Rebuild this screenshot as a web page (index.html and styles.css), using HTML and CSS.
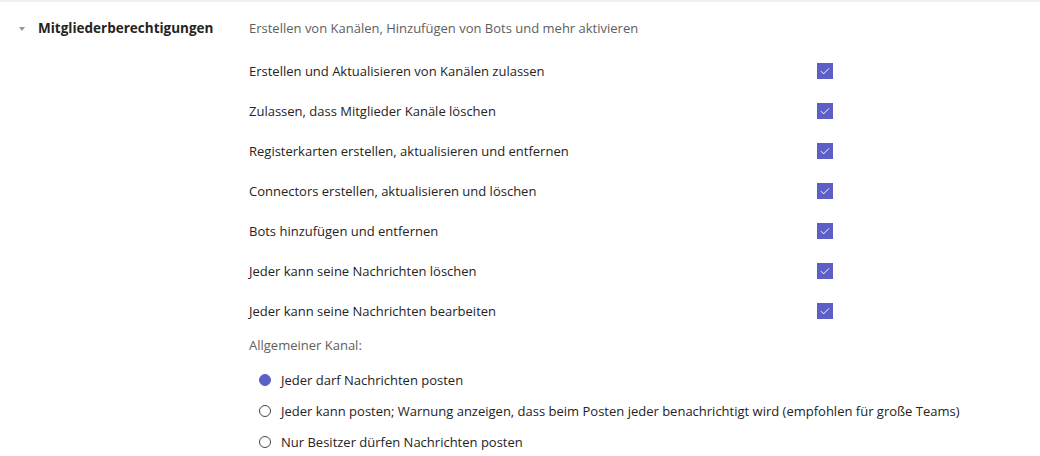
FILE: index.html
```html
<!DOCTYPE html>
<html lang="de">
<head>
<meta charset="utf-8">
<link rel="stylesheet" href="styles.css">
</head>
<body>
<div class="page">
  <section class="section">
    <div class="side">
      <span class="caret"></span>
      <h2 class="title">Mitgliederberechtigungen</h2>
    </div>
    <div class="main">
      <p class="desc">Erstellen von Kanälen, Hinzufügen von Bots und mehr aktivieren</p>
      <div class="row"><span class="label">Erstellen und Aktualisieren von Kanälen zulassen</span><span class="check"><svg viewBox="0 0 16 16" width="16" height="16"><path d="M4 8.2l2.6 2.6L12 5.4" fill="none" stroke="#fff" stroke-width="1"/></svg></span></div>
      <div class="row"><span class="label">Zulassen, dass Mitglieder Kanäle löschen</span><span class="check"><svg viewBox="0 0 16 16" width="16" height="16"><path d="M4 8.2l2.6 2.6L12 5.4" fill="none" stroke="#fff" stroke-width="1"/></svg></span></div>
      <div class="row"><span class="label">Registerkarten erstellen, aktualisieren und entfernen</span><span class="check"><svg viewBox="0 0 16 16" width="16" height="16"><path d="M4 8.2l2.6 2.6L12 5.4" fill="none" stroke="#fff" stroke-width="1"/></svg></span></div>
      <div class="row"><span class="label">Connectors erstellen, aktualisieren und löschen</span><span class="check"><svg viewBox="0 0 16 16" width="16" height="16"><path d="M4 8.2l2.6 2.6L12 5.4" fill="none" stroke="#fff" stroke-width="1"/></svg></span></div>
      <div class="row"><span class="label">Bots hinzufügen und entfernen</span><span class="check"><svg viewBox="0 0 16 16" width="16" height="16"><path d="M4 8.2l2.6 2.6L12 5.4" fill="none" stroke="#fff" stroke-width="1"/></svg></span></div>
      <div class="row"><span class="label">Jeder kann seine Nachrichten löschen</span><span class="check"><svg viewBox="0 0 16 16" width="16" height="16"><path d="M4 8.2l2.6 2.6L12 5.4" fill="none" stroke="#fff" stroke-width="1"/></svg></span></div>
      <div class="row"><span class="label">Jeder kann seine Nachrichten bearbeiten</span><span class="check"><svg viewBox="0 0 16 16" width="16" height="16"><path d="M4 8.2l2.6 2.6L12 5.4" fill="none" stroke="#fff" stroke-width="1"/></svg></span></div>
      <p class="group-label">Allgemeiner Kanal:</p>
      <div class="radios">
        <div class="radio-row"><span class="radio on"></span><span class="label">Jeder darf Nachrichten posten</span></div>
        <div class="radio-row"><span class="radio"></span><span class="label">Jeder kann posten; Warnung anzeigen, dass beim Posten jeder benachrichtigt wird (empfohlen für große Teams)</span></div>
        <div class="radio-row"><span class="radio"></span><span class="label">Nur Besitzer dürfen Nachrichten posten</span></div>
      </div>
    </div>
  </section>
</div>
</body>
</html>
```

FILE: styles.css
```css
* { box-sizing: border-box; }
html, body { margin: 0; padding: 0; background: #fff; }
body {
  font-family: "Open Sans", "Noto Sans", sans-serif;
  font-size: 13px;
  color: #252423;
}
.page {
  border-top: 2px solid #f0f0f0;
  height: 456px;
  overflow: hidden;
}
.section {
  display: flex;
  padding-top: 16px;
}
.side {
  width: 249px;
  flex: none;
  display: flex;
  align-items: center;
  align-self: flex-start;
  height: 20px;
  padding-left: 19px;
}
.caret {
  width: 0;
  height: 0;
  border-left: 3.5px solid transparent;
  border-right: 3.5px solid transparent;
  border-top: 4px solid #979593;
  margin-right: 13px;
  margin-top: 1px;
}
.title {
  margin: 0;
  font-size: 13.5px;
  font-weight: 700;
  color: #252423;
  line-height: 20px;
}
.main {
  width: 584px;
  display: flex;
  flex-direction: column;
}
.desc {
  margin: 0;
  line-height: 20px;
  color: #605e5c;
}
.row {
  display: flex;
  align-items: center;
  justify-content: space-between;
  height: 40px;
}
.desc + .row { margin-top: 13px; }
.label { line-height: 20px; white-space: nowrap; }
.check {
  width: 16px;
  height: 16px;
  background: #5b5fc7;
  display: flex;
}
.group-label {
  margin: 4px 0 0;
  line-height: 20px;
  color: #605e5c;
}
.radios {
  display: flex;
  flex-direction: column;
  padding-left: 10px;
  margin-top: 15px;
  gap: 11px;
}
.radio-row {
  display: flex;
  align-items: center;
  gap: 10px;
}
.radio {
  width: 12px;
  height: 12px;
  border-radius: 50%;
  border: 1px solid #484644;
  flex: none;
}
.radio.on {
  background: #5b5fc7;
  border-color: #5b5fc7;
}
```
